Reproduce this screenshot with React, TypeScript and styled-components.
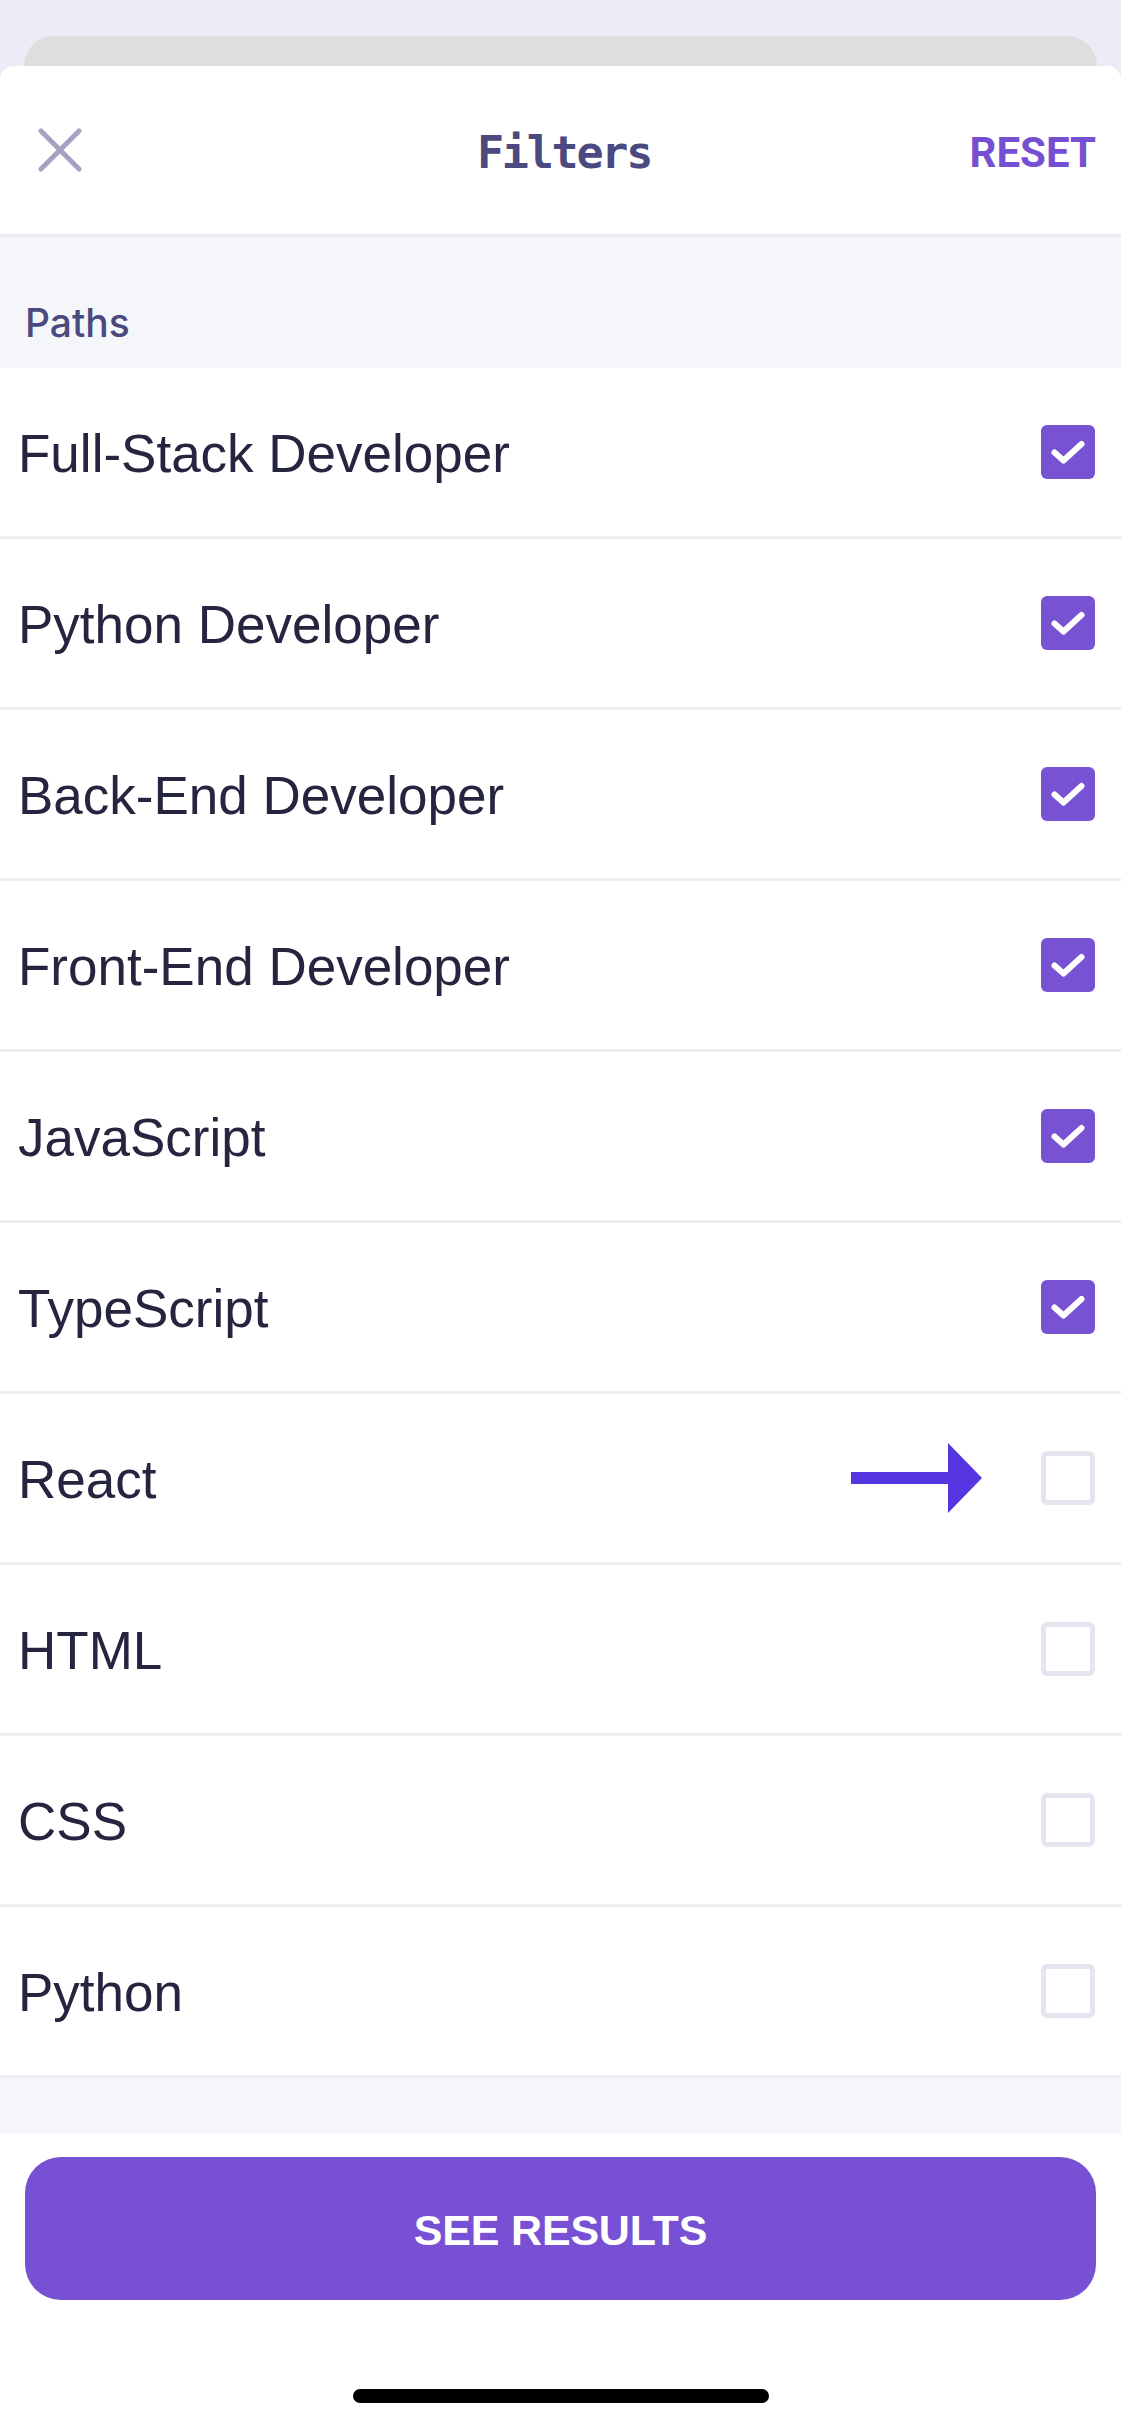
import styled, { createGlobalStyle } from "styled-components";

const filters = [
  { label: "Full-Stack Developer", checked: true },
  { label: "Python Developer", checked: true },
  { label: "Back-End Developer", checked: true },
  { label: "Front-End Developer", checked: true },
  { label: "JavaScript", checked: true },
  { label: "TypeScript", checked: true },
  { label: "React", checked: false, pointed: true },
  { label: "HTML", checked: false },
  { label: "CSS", checked: false },
  { label: "Python", checked: false },
];

const GlobalStyle = createGlobalStyle`
  html, body {
    margin: 0;
    padding: 0;
    background: #ececf6;
  }
  * { box-sizing: border-box; }
`;

const App = () => {
  return (
    <Page>
      <GlobalStyle />
      <BackCard />
      <Sheet>
        <Header>
          <CloseButton aria-label="close">
            <svg width="44" height="44" viewBox="0 0 44 44">
              <path
                d="M3 3 L41 41 M41 3 L3 41"
                stroke="#a4a4c2"
                strokeWidth="5"
                strokeLinecap="round"
                fill="none"
              />
            </svg>
          </CloseButton>
          <Title>Filters</Title>
          <Reset>RESET</Reset>
        </Header>

        <SectionLabel>
          <span>Paths</span>
        </SectionLabel>

        {filters.map((f, i) => (
          <Row key={i}>
            <Label>{f.label}</Label>
            <Right>
              {f.pointed && (
                <svg width="131" height="70" viewBox="0 0 131 70">
                  <rect x="0" y="29" width="98" height="12" fill="#5535e0" />
                  <polygon points="97,0 131,35 97,70" fill="#5535e0" />
                </svg>
              )}
              <Box $checked={f.checked}>
                {f.checked && (
                  <svg width="54" height="54" viewBox="0 0 54 54">
                    <polyline
                      points="13.5,27.5 22.5,35.5 40.5,19"
                      stroke="#fff"
                      strokeWidth="6"
                      strokeLinecap="round"
                      strokeLinejoin="round"
                      fill="none"
                    />
                  </svg>
                )}
              </Box>
            </Right>
          </Row>
        ))}

        <Spacer />

        <Footer>
          <SeeResults>SEE RESULTS</SeeResults>
          <HomeBar />
        </Footer>
      </Sheet>
    </Page>
  );
};

export default App;

const Page = styled.div`
  width: 1121px;
  min-height: 2427px;
  background: #ececf6;
  padding-top: 36px;
  display: flex;
  flex-direction: column;
`;

const BackCard = styled.div`
  height: 30px;
  margin: 0 24px;
  background: #dedede;
  border-radius: 30px 30px 0 0;
`;

const Sheet = styled.div`
  background: #fff;
  border-radius: 14px 14px 0 0;
  display: flex;
  flex-direction: column;
`;

const Header = styled.div`
  height: 171px;
  border-bottom: 3px solid #ececf3;
  display: grid;
  grid-template-columns: 1fr auto 1fr;
  align-items: center;
  padding: 0 25px 0 38px;
`;

const CloseButton = styled.div`
  width: 44px;
  height: 44px;
  display: flex;
`;

const Title = styled.div`
  font-family: "DejaVu Sans Mono", "Liberation Mono", monospace;
  font-weight: bold;
  font-size: 45px;
  letter-spacing: -2.2px;
  color: #4a4a80;
  line-height: 1;
  padding: 5px 0 0 0;
  margin-left: -6px;
`;

const Reset = styled.div`
  justify-self: end;
  font-family: Roboto, "Liberation Sans", sans-serif;
  font-weight: 700;
  font-size: 42px;
  color: #7650d2;
  line-height: 1;
  padding-top: 5px;
`;

const SectionLabel = styled.div`
  height: 131px;
  background: #f5f6fa;
  display: flex;
  align-items: flex-end;
  padding: 0 0 26px 25px;

  span {
    font-family: Inter, "Liberation Sans", sans-serif;
    font-weight: 500;
    font-size: 39px;
    line-height: 1;
    color: #4a4a80;
  }
`;

const Row = styled.div`
  height: 171px;
  border-bottom: 3px solid #ececf3;
  display: flex;
  align-items: center;
  justify-content: space-between;
  padding: 0 26px 0 18px;
`;

const Label = styled.div`
  font-family: "Liberation Sans", Arial, sans-serif;
  font-size: 53px;
  color: #25253f;
  line-height: 1;
  padding-top: 3px;
`;

const Right = styled.div`
  display: flex;
  align-items: center;
  gap: 59px;
`;

const Box = styled.div<{ $checked: boolean }>`
  width: 54px;
  height: 54px;
  border-radius: 6px;
  display: flex;
  background: ${(p) => (p.$checked ? "#7752d3" : "#fff")};
  border: ${(p) => (p.$checked ? "none" : "5px solid #e4e5ee")};
`;

const Spacer = styled.div`
  height: 55px;
  background: #f5f6fa;
`;

const Footer = styled.div`
  padding: 24px 25px 24px 25px;
  display: flex;
  flex-direction: column;
  align-items: center;
`;

const SeeResults = styled.button`
  width: 100%;
  height: 143px;
  border: none;
  border-radius: 36px;
  background: #7750d3;
  color: #fff;
  font-family: "Liberation Sans", Arial, sans-serif;
  font-weight: bold;
  font-size: 43px;
  letter-spacing: -0.2px;
  padding-top: 4px;
  cursor: pointer;
`;

const HomeBar = styled.div`
  margin-top: 89px;
  width: 416px;
  height: 14px;
  border-radius: 7px;
  background: #000;
`;
